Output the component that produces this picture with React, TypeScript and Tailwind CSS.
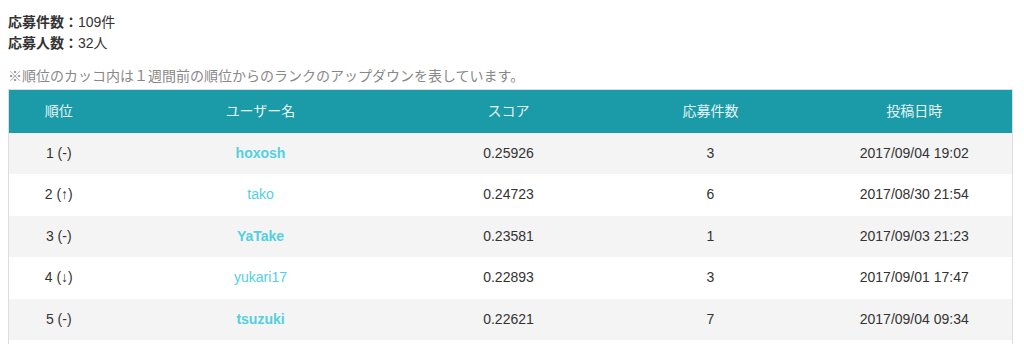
import React from 'react';

type Row = {
  rank: string;
  name: string;
  bold: boolean;
  score: string;
  count: number;
  date: string;
};

const rows: Row[] = [
  { rank: '1 (-)', name: 'hoxosh', bold: true, score: '0.25926', count: 3, date: '2017/09/04 19:02' },
  { rank: '2 (↑)', name: 'tako', bold: false, score: '0.24723', count: 6, date: '2017/08/30 21:54' },
  { rank: '3 (-)', name: 'YaTake', bold: true, score: '0.23581', count: 1, date: '2017/09/03 21:23' },
  { rank: '4 (↓)', name: 'yukari17', bold: false, score: '0.22893', count: 3, date: '2017/09/01 17:47' },
  { rank: '5 (-)', name: 'tsuzuki', bold: true, score: '0.22621', count: 7, date: '2017/09/04 09:34' },
];

const headers = ['順位', 'ユーザー名', 'スコア', '応募件数', '投稿日時'];

export default function App() {
  return (
    <div
      className="bg-white text-[14px] text-[#333] px-2 pt-[12px] h-[344px] overflow-hidden"
      style={{ fontFamily: '"Liberation Sans", Arial, "Noto Sans CJK JP", sans-serif' }}
    >
      <div className="leading-[21px]">
        <p>
          <span className="font-bold">応募件数：</span>109件
        </p>
        <p>
          <span className="font-bold">応募人数：</span>32人
        </p>
      </div>

      <p className="mt-[12px] leading-[20px] text-[#888]">
        ※順位のカッコ内は１週間前の順位からのランクのアップダウンを表しています。
      </p>

      <table className="w-[1005px] border-collapse border border-[#ddd] table-fixed mt-[3px]">
        <colgroup>
          <col className="w-[100px]" />
          <col className="w-[304px]" />
          <col className="w-[192px]" />
          <col className="w-[212px]" />
          <col />
        </colgroup>
        <thead>
          <tr className="bg-[#1b9aa8] h-[43px]">
            {headers.map((h) => (
              <th key={h} className="font-normal text-[#e6f4f5] text-center">
                {h}
              </th>
            ))}
          </tr>
        </thead>
        <tbody>
          {rows.map((r, i) => (
            <tr key={r.name} className={`h-[41.5px] ${i % 2 === 0 ? 'bg-[#f4f4f4]' : 'bg-white'}`}>
              <td className="text-center">{r.rank}</td>
              <td className="text-center">
                <a href="#" className={`text-[#52d0e0] ${r.bold ? 'font-bold' : ''}`}>
                  {r.name}
                </a>
              </td>
              <td className="text-center">{r.score}</td>
              <td className="text-center">{r.count}</td>
              <td className="text-center">{r.date}</td>
            </tr>
          ))}
          {/* next row continues below the fold */}
          <tr className="h-[41.5px] bg-white">
            <td colSpan={5} />
          </tr>
        </tbody>
      </table>
    </div>
  );
}
